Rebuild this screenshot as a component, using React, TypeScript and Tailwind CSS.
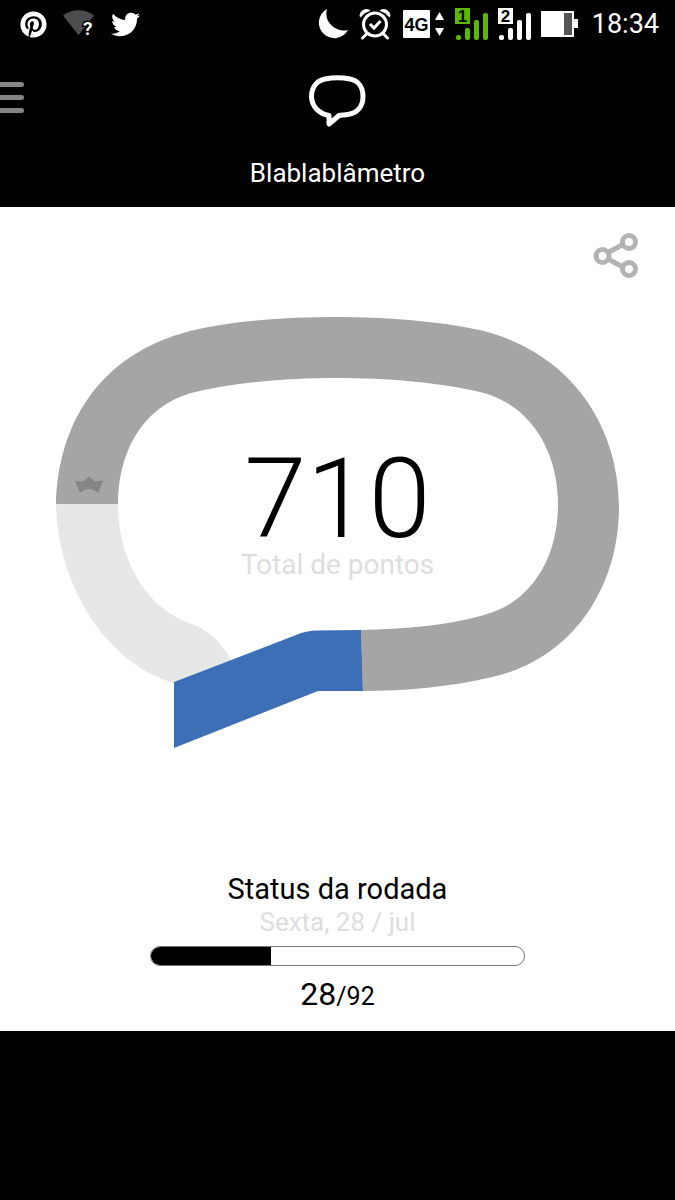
import { FaPinterest, FaTwitter } from 'react-icons/fa';

const round = { current: 28, total: 92, date: 'Sexta, 28 / jul' };
const totalPoints = 710;

function WifiUnknownIcon() {
  return (
    <svg width="32" height="34" viewBox="0 -3 32 34" aria-hidden="true">
      <path d="M0 5.500C9-1.500 22-1.500 31 5.500L15.500 25Z" fill="#4d4d4d" />
      <text x="20" y="25" fontSize="19" fontWeight="700" fill="#fff" stroke="#000" strokeWidth="3" paintOrder="stroke">?</text>
    </svg>
  );
}

function MoonIcon() {
  return (
    <svg width="32" height="32" viewBox="0 0 32 32" aria-hidden="true">
      <path d="M10 1A15.500 15.500 0 1 0 31 22C20 25 6 15 10 1Z" fill="#fff" />
    </svg>
  );
}

function AlarmIcon() {
  return (
    <svg width="34" height="32" viewBox="0 0 34 32" fill="none" stroke="#fff" strokeLinecap="round" aria-hidden="true">
      <circle cx="16" cy="16.500" r="11.500" strokeWidth="3" />
      <path d="M11 16L15 20L21.500 13" strokeWidth="3" strokeLinecap="butt" />
      <path d="M7.500 26L3.500 30M24.500 26L28.500 30" strokeWidth="3" />
      <path d="M1 8C1 3 6 0 11 2.500Q5 4 2 8.500ZM31 8C31 3 26 0 21 2.500Q27 4 30 8.500Z" fill="#fff" strokeWidth="1" />
    </svg>
  );
}

function MobileDataIcon() {
  return (
    <svg width="42" height="28" viewBox="0 0 42 28" aria-hidden="true">
      <rect width="27" height="28" rx="1" fill="#fff" />
      <text x="13.500" y="20.500" textAnchor="middle" fontSize="18" fontWeight="700" className="font-['Liberation_Sans',Arial,sans-serif]">4G</text>
      <path d="M36.500 2L41 10H32ZM36.500 26L41 18H32Z" fill="#fff" />
    </svg>
  );
}

function SignalIcon({ sim, color }: { sim: string; color: string }) {
  return (
    <svg width="33" height="34" viewBox="0 0 33 34" fill={color} aria-hidden="true">
      <rect y="1" width="15" height="16" />
      <text x="7.500" y="15" textAnchor="middle" fontSize="17" fontWeight="700" fill="#000" className="font-['Liberation_Sans',Arial,sans-serif]">{sim}</text>
      <rect x="1" y="28" width="5" height="5" rx="2" />
      <rect x="10" y="21" width="5" height="12" rx="2" />
      <rect x="19" y="13" width="5" height="20" rx="2" />
      <rect x="28" y="6" width="5" height="27" rx="2" />
    </svg>
  );
}

function BatteryIcon() {
  return (
    <svg width="37" height="26" viewBox="0 0 37 26" aria-hidden="true">
      <path d="M0 0H33V8H37V17H33V26H0Z" fill="#fff" />
      <rect x="23" y="2" width="8" height="22" fill="#555" />
    </svg>
  );
}

function StatusBar() {
  return (
    <div className="flex h-12 items-center justify-between pr-4 pl-5 text-white">
      <div className="flex items-center gap-4">
        <FaPinterest size={27} aria-hidden="true" />
        <WifiUnknownIcon />
        <FaTwitter size={29} aria-hidden="true" />
      </div>
      <div className="flex items-center gap-3.5">
        <div className="flex items-center gap-2.5">
          <MoonIcon />
          <AlarmIcon />
          <MobileDataIcon />
          <SignalIcon sim="1" color="#5cb800" />
          <SignalIcon sim="2" color="#fff" />
          <BatteryIcon />
        </div>
        <span className="text-[27px] leading-8">18:34</span>
      </div>
    </div>
  );
}

function Header() {
  return (
    <header className="text-white">
      <div className="grid grid-cols-3 items-center pt-[26px]">
        <button type="button" aria-label="Menu" className="flex w-6 flex-col gap-2 pb-2.5">
          <span className="h-[5px] w-full rounded-r-full bg-[#858585]" />
          <span className="h-[5px] w-full rounded-r-full bg-[#858585]" />
          <span className="h-[5px] w-full rounded-r-full bg-[#858585]" />
        </button>
        <svg viewBox="308 74 60 56" className="h-14 w-[60px] justify-self-center" fill="none" stroke="#fff" strokeWidth="5" strokeLinejoin="round" aria-hidden="true">
          <path d="M329 124V115.500C319 114 311.500 106 311.500 96.500C311.500 87 317 80.500 325 79C333 77.500 342 77.500 350 79C358 80.500 363 87 363 96.500C363 107 357 113 348 114.500C345 115 342 115 339 115.500Z" />
        </svg>
      </div>
      <h1 className="pt-[25px] pb-4 text-center text-[26px] leading-9">Blablablâmetro</h1>
    </header>
  );
}

function ShareIcon() {
  return (
    <svg width="46" height="46" viewBox="0 0 46 46" fill="none" stroke="#b3b3b3" strokeWidth="5" aria-hidden="true">
      <path d="M15 19.500L29 12M15 26L29 33.500" />
      <circle cx="9.500" cy="23" r="6.500" />
      <circle cx="36" cy="9" r="6.500" />
      <circle cx="36" cy="36" r="6.500" />
    </svg>
  );
}

function PointsGauge() {
  return (
    <div className="grid px-14">
      <svg viewBox="56 316 563 433" className="col-start-1 row-start-1 w-full" aria-hidden="true">
        {/* light segment */}
        <path
          d="M56 504C58 590 110 665 174 683L231 660C223 644 208 630 192 624C146 609 118 560 118 504Z"
          fill="#e7e7e7"
        />
        {/* ring */}
        <path
          d="M56 504C58 425 98 355 190 331C235 320 290 317 337 317C384 317 440 321 484 331C575 355 619 430 619 507C619 590 570 660 492 677C450 687 405 691 363 691L361 630C405 629 450 625 484 615C530 603 558 560 558 504C558 450 530 406 484 393C440 382 385 378 337 378C290 378 235 382 191 393C140 408 118 455 118 504Z"
          fill="#a5a5a5"
        />
        {/* current score */}
        <path d="M174 682L296 635Q306 630.500 318 630.500L361 630L363 691H318L174 748Z" fill="#3d6fb6" />
        {/* crown */}
        <path d="M75 481L83 481.500L89 476.500L95 481.500L103 480.500L98 493Q89 485 80 493Z" fill="#858585" />
      </svg>
      <div className="col-start-1 row-start-1 pt-[133px] text-center">
        <p className="text-[112px] leading-[100px] font-light">{totalPoints}</p>
        <p className="text-[28px] leading-8 text-[#dedede]">Total de pontos</p>
      </div>
    </div>
  );
}

function RoundStatus() {
  const percent = (round.current / round.total) * 100;

  return (
    <section className="flex flex-col items-center pt-[123px] pb-3.5">
      <h2 id="round-status" className="text-[29px] leading-[34px]">Status da rodada</h2>
      <p className="text-[26px] leading-8 text-[#dedede]">{round.date}</p>
      <div
        role="progressbar"
        aria-labelledby="round-status"
        aria-valuenow={round.current}
        aria-valuemax={round.total}
        className="mt-2 h-5 w-5/9 overflow-hidden rounded-full border border-[#777]"
      >
        {/* the extra pixels make up for the rounded end */}
        <div className="h-full bg-black" style={{ width: `calc(${percent}% + 6px)` }} />
      </div>
      <p className="pt-2 text-[32px] leading-10">
        {round.current}
        <span className="text-[25px]">/{round.total}</span>
      </p>
    </section>
  );
}

export default function App() {
  return (
    <div className="min-h-screen bg-black font-[Roboto,sans-serif] text-black">
      <StatusBar />
      <Header />
      <main className="bg-white">
        <div className="flex justify-end px-9 pt-[26px] pb-[37px]">
          <button type="button" aria-label="Compartilhar">
            <ShareIcon />
          </button>
        </div>
        <PointsGauge />
        <RoundStatus />
      </main>
    </div>
  );
}
